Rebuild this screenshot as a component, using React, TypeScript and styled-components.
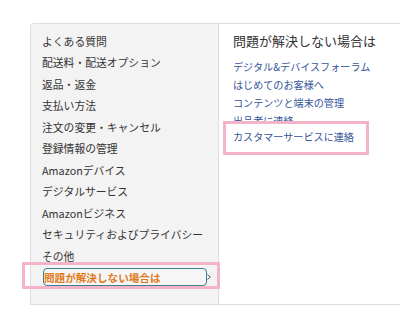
import styled, { createGlobalStyle } from "styled-components"

const Global = createGlobalStyle`
    html, body {
        margin: 0;
        padding: 0;
        background: #fff;
        font-family: "Noto Sans CJK JP", "Noto Sans", sans-serif;
    }
`
const Page = styled.div`
    padding: 23px 0 0 30px;
    height: 318px;
    box-sizing: border-box;
    overflow: hidden;
`
const Card = styled.div`
    display: flex;
    height: 282px;
    box-sizing: border-box;
    border: 1px solid #dedede;
    border-right: none;
    border-top-left-radius: 4px;
    overflow: visible;
`
const Sidebar = styled.ul`
    width: 188px;
    box-sizing: border-box;
    margin: 0;
    padding: 6px 0 0 11px;
    list-style: none;
    background: #f3f3f3;
    border-right: 1px solid #dedede;
    border-top-left-radius: 4px;
`
const MenuItem = styled.li`
    height: 21.5px;
    display: flex;
    align-items: center;
    font-size: 10.8px;
    color: #333;
    white-space: nowrap;
`
const ActiveItem = styled.div`
    position: relative;
    margin-left: 1px;
    width: 164px;
    height: 18px;
    box-sizing: border-box;
    border: 1.5px solid #3d7f8c;
    border-radius: 4px;
    background: #f6f6f6;
    display: flex;
    align-items: center;
    padding-left: 0;
    font-size: 10.6px;
    font-weight: 700;
    color: #e27a1c;
    &::after {
        content: "";
        position: absolute;
        left: -22px;
        top: -7px;
        right: -14px;
        bottom: -4px;
        border: 3px solid #f5b3ca;
        pointer-events: none;
    }
`
const Chevron = styled.svg`
    position: absolute;
    right: -5px;
    top: 5px;
`
const Panel = styled.div`
    flex: 1;
    padding: 8px 0 0 14px;
    background: #fff;
`
const Title = styled.div`
    font-size: 13px;
    line-height: 18px;
    color: #333;
    margin-bottom: 8px;
`
const Links = styled.ul`
    margin: 0;
    padding: 0;
    list-style: none;
`
const Link = styled.li`
    font-size: 10.1px;
    line-height: 18px;
    color: #34559a;
    white-space: nowrap;
`
const Highlight = styled.li`
    position: relative;
    margin: -9px 0 0 -10px;
    width: 146px;
    height: 34px;
    box-sizing: border-box;
    border: 3px solid #f5b3ca;
    background: #fff;
    padding: 4px 0 0 7px;
    font-size: 10.1px;
    line-height: 18px;
    color: #34559a;
    white-space: nowrap;
`

const menu = [
    "よくある質問",
    "配送料・配送オプション",
    "返品・返金",
    "支払い方法",
    "注文の変更・キャンセル",
    "登録情報の管理",
    "Amazonデバイス",
    "デジタルサービス",
    "Amazonビジネス",
    "セキュリティおよびプライバシー",
    "その他",
]

const links = [
    "デジタル&デバイスフォーラム",
    "はじめてのお客様へ",
    "コンテンツと端末の管理",
    "出品者に連絡",
]

const App = () => {
    return <Page>
        <Global />
        <Card>
            <Sidebar>
                {menu.map(m => <MenuItem key={m}>{m}</MenuItem>)}
                <MenuItem>
                    <ActiveItem>
                        問題が解決しない場合は
                        <Chevron width="4" height="6" viewBox="0 0 4 6">
                            <path d="M0.5 0.5 L3.3 3 L0.5 5.5" fill="none" stroke="#555" strokeWidth="1" />
                        </Chevron>
                    </ActiveItem>
                </MenuItem>
            </Sidebar>
            <Panel>
                <Title>問題が解決しない場合は</Title>
                <Links>
                    {links.map(l => <Link key={l}>{l}</Link>)}
                    <Highlight>カスタマーサービスに連絡</Highlight>
                </Links>
            </Panel>
        </Card>
    </Page>
}

export default App
